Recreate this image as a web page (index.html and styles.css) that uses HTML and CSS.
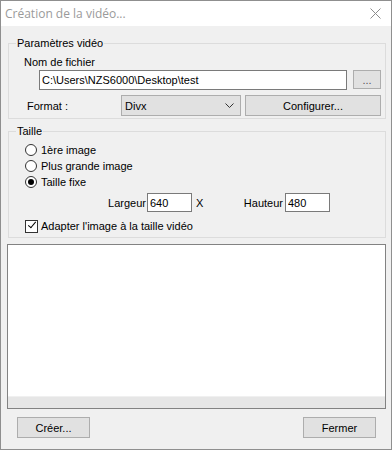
FILE: index.html
```html
<!DOCTYPE html>
<html lang="fr">
<head>
    <meta charset="UTF-8">
    <meta name="viewport" content="width=device-width, initial-scale=1.0">
    <title>Création de la vidéo...</title>
    <link rel="stylesheet" href="styles.css">
</head>
<body>

    <div class="window">
        <div class="titlebar">
            <span class="title">Création de la vidéo...</span>
            <svg class="close" width="12" height="12" viewBox="0 0 12 12">
                <path d="M0.5 0.5 L10.5 10.5 M10.5 0.5 L0.5 10.5" stroke="#8c8c8c" stroke-width="1" fill="none"/>
            </svg>
        </div>

        <div class="content">
            <fieldset class="group video">
                <legend>Paramètres vidéo</legend>
                <div class="name-label">Nom de fichier</div>
                <div class="file-row">
                    <input class="field file" type="text" value="C:\Users\NZS6000\Desktop\test">
                    <button class="btn browse" type="button">...</button>
                </div>
                <div class="format-row">
                    <span class="format-label">Format :</span>
                    <div class="select">
                        <span>Divx</span>
                        <svg width="9" height="5" viewBox="0 0 9 5">
                            <path d="M0.5 0.5 L4.5 4.5 L8.5 0.5" stroke="#333" stroke-width="1" fill="none"/>
                        </svg>
                    </div>
                    <button class="btn configure" type="button">Configurer...</button>
                </div>
            </fieldset>

            <fieldset class="group size">
                <legend>Taille</legend>
                <label class="opt"><input type="radio" name="size"> 1ère image</label>
                <label class="opt"><input type="radio" name="size"> Plus grande image</label>
                <label class="opt"><input type="radio" name="size" checked> Taille fixe</label>
                <div class="dims">
                    <span class="dim-label first">Largeur</span>
                    <input class="field dim" type="text" value="640">
                    <span class="times">X</span>
                    <span class="dim-label second">Hauteur</span>
                    <input class="field dim" type="text" value="480">
                </div>
                <label class="opt fit"><input type="checkbox" checked> Adapter l'image à la taille vidéo</label>
            </fieldset>

            <div class="log">
                <div class="log-area"></div>
                <div class="hscroll"></div>
            </div>

            <div class="actions">
                <button class="btn action" type="button">Créer...</button>
                <button class="btn action" type="button">Fermer</button>
            </div>
        </div>
    </div>

</body>
</html>
```

FILE: styles.css
```css
body{
    margin: 0;
    font-family: "Liberation Sans", Arial, sans-serif;
    font-size: 11px;
    color: #000;
    background: #fff;
}
.window{
    width: 392px;
    height: 450px;
    box-sizing: border-box;
    border: 1px solid #8f8f8f;
    background: #f0f0f0;
}
.titlebar{
    height: 25px;
    background: #fff;
    display: flex;
    align-items: center;
    justify-content: space-between;
    padding: 0 9px 0 4px;
}
.title{
    font-family: "Open Sans", "Noto Sans", sans-serif;
    font-size: 12px;
    color: #9a9a9a;
}
.close{
    margin-top: 1px;
}
.content{
    padding: 0 5px 0 7px;
}

/* group boxes */
.group{
    margin: 0;
    padding: 0 3px 2px 0;
    border: 1px solid #dcdcdc;
    min-width: 0;
}
.group legend{
    margin-left: 7px;
    padding: 0 1px;
    line-height: 14px;
}
.video{
    margin-top: 10px;
}
.size{
    margin-top: 5px;
    padding-bottom: 3px;
}
.name-label{
    margin: 5px 0 0 15px;
    line-height: 14px;
}
.file-row{
    display: flex;
    gap: 6px;
    margin: 1px 0 0 30px;
}
.field{
    box-sizing: border-box;
    font: inherit;
    border: 1px solid #7a7a7a;
    background: #fff;
    padding: 0 2px;
    margin: 0;
    outline: none;
}
.file{
    width: 308px;
    height: 20px;
}
.btn{
    box-sizing: border-box;
    font: inherit;
    background: #e1e1e1;
    border: 1px solid #adadad;
    padding: 0;
    margin: 0;
    color: #000;
}
.browse{
    width: 28px;
    height: 19px;
    color: #555;
}
.format-row{
    display: flex;
    align-items: center;
    margin-top: 5px;
}
.format-label{
    width: 94px;
    margin-left: 18px;
}
.select{
    box-sizing: border-box;
    width: 120px;
    height: 21px;
    background: #e1e1e1;
    border: 1px solid #adadad;
    display: flex;
    align-items: center;
    justify-content: space-between;
    padding: 0 6px 0 3px;
}
.configure{
    width: 136px;
    height: 21px;
    margin-left: 4px;
}

/* radios and checkbox */
.opt{
    display: flex;
    align-items: center;
    gap: 4px;
    height: 16px;
    margin-left: 16px;
}
.size legend + .opt{
    margin-top: 4px;
}
.opt input{
    appearance: none;
    margin: 0;
    width: 12px;
    height: 12px;
    border: 1px solid #333;
    border-radius: 50%;
    background: #fff;
    display: grid;
    place-content: center;
}
.opt input[type=radio]:checked::before{
    content: "";
    width: 6px;
    height: 6px;
    border-radius: 50%;
    background: #000;
}
.fit{
    margin-top: 6px;
    gap: 3px;
}
.fit input{
    width: 13px;
    height: 13px;
    border-radius: 0;
}
.fit input:checked::before{
    content: "";
    width: 7px;
    height: 3px;
    border-left: 1px solid #000;
    border-bottom: 1px solid #000;
    transform: translateY(-2px) rotate(-50deg);
}
.dims{
    display: flex;
    align-items: center;
    margin-top: 3px;
}
.dim-label{
    text-align: right;
}
.dim-label.first{
    width: 137px;
    margin-right: 1px;
}
.dim-label.second{
    width: 79px;
    margin-right: 2px;
}
.times{
    width: 8px;
    margin-left: 4px;
}
.dim{
    width: 45px;
    height: 19px;
}

/* output box */
.log{
    margin: 6px 0 0 -1px;
    width: 379px;
    height: 165px;
    box-sizing: border-box;
    border: 1px solid #828282;
    display: flex;
    flex-direction: column;
}
.log-area{
    flex: 1;
    background: #fff;
}
.hscroll{
    height: 11px;
    background: #e6e6e6;
    border-top: 1px solid #f0f0f0;
}

.actions{
    display: flex;
    justify-content: space-between;
    margin-top: 8px;
    padding: 0 10px 0 9px;
}
.action{
    width: 73px;
    height: 21px;
}
```
